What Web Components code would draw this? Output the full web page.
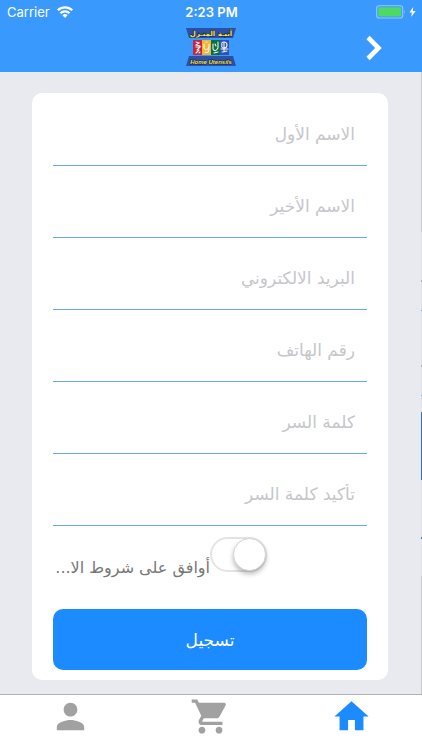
<!DOCTYPE html>
<html lang="ar">
<head>
<meta charset="utf-8">
<meta name="viewport" content="width=device-width, initial-scale=1">
<title>تسجيل</title>
<style>
html, body { margin: 0; height: 100%; }
body { background: #e9eaf0; font-family: "DejaVu Sans", sans-serif; }
</style>
</head>
<body>
<register-screen></register-screen>
<script>
function define(name, html, setup) {
  const template = document.createElement('template');
  template.innerHTML = html;
  customElements.define(name, class extends HTMLElement {
    connectedCallback() {
      if (this.shadowRoot) return;
      const root = this.attachShadow({ mode: 'open' });
      root.append(template.content.cloneNode(true));
      if (setup) setup(this, root);
    }
  });
}

define('status-bar', `
<style>
:host { display: grid; grid-template-columns: 1fr auto 1fr; align-items: center; height: 24px; padding: 0 6px 0 7px; color: #fff; font: 13px Inter, sans-serif; }
.left, .right { display: flex; align-items: center; gap: 7px; }
.right { justify-content: flex-end; gap: 3px; }
b { font-size: 13px; font-weight: 600; }
svg { display: block; }
</style>
<div class="left"><span>Carrier</span>
<svg width="16" height="12" viewBox="0 0 16 12" fill="none" stroke="#fff" stroke-width="2.3"><path d="M.8 4.3a10.3 10.3 0 0 1 14.4 0M3.4 7.3a6.6 6.6 0 0 1 9.2 0"/><path d="M8 12 5.4 9.3a3.8 3.8 0 0 1 5.2 0z" fill="#fff" stroke="none"/></svg></div>
<b>2:23 PM</b>
<div class="right">
<svg width="30" height="14" viewBox="0 0 30 14"><rect x=".7" y=".7" width="26" height="12.3" rx="2.6" fill="none" stroke="#94c8ff" stroke-width="1.1"/><rect x="2.2" y="2.2" width="23" height="9.3" rx="1.2" fill="#4cd964"/><path d="M28 4.8q1.6 2 0 4z" fill="#94c8ff"/></svg>
<svg width="7" height="12" viewBox="0 0 7 12" fill="#fff"><path d="M4.2 1 .4 6.6h2.5L2.2 11 6.6 5H3.8z"/></svg>
</div>`);

define('brand-logo', `
<style>:host { display: block; } svg { display: block; }</style>
<svg width="52" height="42" viewBox="0 0 52 42" role="img" aria-label="Home Utensils">
<path d="M1 1h50l-3 10H4z" fill="#2b50a5"/><path d="M4 29h44l3 10H1z" fill="#2b50a5"/>
<rect x="8" y="13" width="9" height="15" fill="#c9243f"/><rect x="17" y="13" width="9" height="15" fill="#efb637"/><rect x="26" y="13" width="9" height="15" fill="#087044"/><rect x="35" y="13" width="9" height="15" fill="#2954b5"/>
<g fill="none" stroke="#f2f2ef" stroke-width="1.1" stroke-linecap="round">
<path d="M11 15l3 1-3 2 4 1M11 20h4l-3 3M14 23l-3 3M15 25l-1 1"/>
<path d="M19 17v4q3 4 5-1v-3M21 15h1M20 25q4 2 4-4"/>
<path d="M28 17v5q2 4 5-1v-6M30 17l1 2M29 26l4-1"/>
<path d="M37 18q-1-3 2-3t3 3-3 3-2-3M39 16v9M36 22h7M37 25l5-1"/></g>
<g fill="#f4e64e" stroke="#172044" stroke-width="1" paint-order="stroke" text-anchor="middle" font-weight="700">
<text x="26" y="9" font-family="DejaVu Sans" font-size="7" direction="rtl">آنيـة المنـزل</text>
<text x="26" y="37" font-family="Liberation Sans" font-style="italic" font-size="6">Home Utensils</text></g>
</svg>`);

define('nav-bar', `
<style>
:host { display: grid; grid-template-columns: 1fr auto 1fr; align-items: center; height: 48px; }
brand-logo { grid-column: 2; }
button { justify-self: end; border: 0; background: none; padding: 0; margin-right: 36px; width: 24px; height: 28px; }
svg { display: block; }
</style>
<brand-logo></brand-logo>
<button type="button" aria-label="رجوع"><svg width="24" height="28" viewBox="0 0 24 28" fill="none" stroke="#fff" stroke-width="4.6"><path d="m6 3.5 10.500 10.500L6 24.500"/></svg></button>`);

define('app-header', `
<style>:host { display: block; background: #3a99fd; }</style>
<status-bar></status-bar><nav-bar></nav-bar>`);

define('form-field', `
<style>
:host { display: flex; height: 72px; }
input { flex: 1; min-width: 0; box-sizing: border-box; border: 0; border-bottom: 1px solid #6aa5f0; border-radius: 0; background: none; padding: 8px 12px 0; direction: rtl; font: 17px "DejaVu Sans", sans-serif; color: #555; outline: 0; }
input::placeholder { color: #c6c6cb; opacity: 1; }
</style><input>`, (host, root) => {
  const input = root.querySelector('input');
  input.type = host.getAttribute('type') || 'text';
  input.placeholder = host.getAttribute('label');
  input.setAttribute('aria-label', host.getAttribute('label'));
});

define('terms-switch', `
<style>
:host { display: grid; grid-template-columns: minmax(0, 1fr) minmax(0, 1fr); height: 83px; }
label { padding-top: 30px; font-size: 16px; line-height: 24px; color: #777; white-space: nowrap; direction: rtl; text-align: right; }
input { appearance: none; margin: 11px 0 0; width: 57px; height: 35px; box-sizing: border-box; border: 2px solid #e4e4e4; border-radius: 18px; background: #fff; display: flex; justify-content: flex-end; }
input::before { content: ""; box-sizing: border-box; width: 33px; height: 33px; margin: -1px; border-radius: 50%; border: 1px solid #d4d4d4; background: #fff; box-shadow: 0 3px 5px #0004; }
input:checked { justify-content: flex-start; background: #4cd964; }
</style>
<label for="terms">أوافق على شروط الا...</label><input id="terms" type="checkbox" role="switch">`);

define('primary-button', `
<style>
:host { display: block; }
button { display: block; width: 100%; height: 61px; border: 0; border-radius: 10px; background: #1b8bff; color: #fff; font: 17px "DejaVu Sans", sans-serif; }
</style><button type="submit"><slot></slot></button>`);

define('form-card', `
<style>
:host { display: block; margin: 21px 33px 14px 32px; padding: 1px 21px 10px; border-radius: 10px; background: #fff; }
</style><form><slot></slot></form>`);

define('next-page-edge', `
<style>
:host { display: block; width: 1px; background: linear-gradient(#c6c6cb 160px, #e2e3e9 160px 208px, #a9adb5 208px 210px, #e2e3e9 210px 238px, #72a7e8 238px 239px, #e2e3e9 239px 293px, #a9adb5 293px 295px, #e2e3e9 295px 323px, #72a7e8 323px 324px, #e2e3e9 324px 340px, #2b70c4 340px 408px, #e2e3e9 408px 465px, #5278a8 465px 467px, #e2e3e9 467px 504px, #c6c6cb 504px); }
</style>`);

define('tab-bar', `
<style>
:host { display: block; background: #fff; border-top: 1px solid #b2b2b5; }
nav { display: grid; grid-template-columns: repeat(3, 1fr); height: 55px; }
a { display: flex; justify-content: center; padding-top: 1px; color: #a1a1a1; }
a.active { color: #1b8bff; }
svg { display: block; fill: currentColor; }
</style>
<nav>
<a href="#account" aria-label="الحساب"><svg width="41" height="41" viewBox="0 0 24 24"><path d="M12 12c2.21 0 4-1.79 4-4s-1.79-4-4-4-4 1.79-4 4 1.79 4 4 4zm0 2c-2.67 0-8 1.34-8 4v2h16v-2c0-2.66-5.33-4-8-4z"/></svg></a>
<a href="#cart" aria-label="السلة"><svg width="41" height="41" viewBox="0 0 24 24"><path d="M7 18c-1.1 0-1.99.9-1.99 2S5.900 22 7 22s2-.9 2-2-.9-2-2-2zM1 2v2h2l3.600 7.590-1.350 2.450c-.16.28-.25.61-.25.96 0 1.100.9 2 2 2h12v-2H7.420c-.14 0-.25-.11-.25-.25l.03-.12.9-1.630h7.450c.75 0 1.410-.41 1.750-1.030l3.580-6.490A1 1 0 0 0 20 4H5.210l-.94-2H1zm16 16c-1.100 0-1.990.9-1.990 2s.89 2 1.990 2 2-.9 2-2-.9-2-2-2z"/></svg></a>
<a href="#home" class="active" aria-label="الرئيسية"><svg width="41" height="41" viewBox="0 0 24 24"><path d="M10 20v-6h4v6h5v-8h3L12 3 2 12h3v8z"/></svg></a>
</nav>`);

define('register-screen', `
<style>
:host { display: flex; flex-direction: column; min-height: 100%; }
main { flex: 1; display: grid; grid-template-columns: 1fr auto; align-items: start; }
next-page-edge { align-self: stretch; }
</style>
<app-header></app-header>
<main>
<form-card>
<form-field label="الاسم الأول"></form-field>
<form-field label="الاسم الأخير"></form-field>
<form-field label="البريد الالكتروني" type="email"></form-field>
<form-field label="رقم الهاتف" type="tel"></form-field>
<form-field label="كلمة السر" type="password"></form-field>
<form-field label="تأكيد كلمة السر" type="password"></form-field>
<terms-switch></terms-switch>
<primary-button>تسجيل</primary-button>
</form-card>
<next-page-edge></next-page-edge>
</main>
<tab-bar></tab-bar>`);
</script>
</body>
</html>
